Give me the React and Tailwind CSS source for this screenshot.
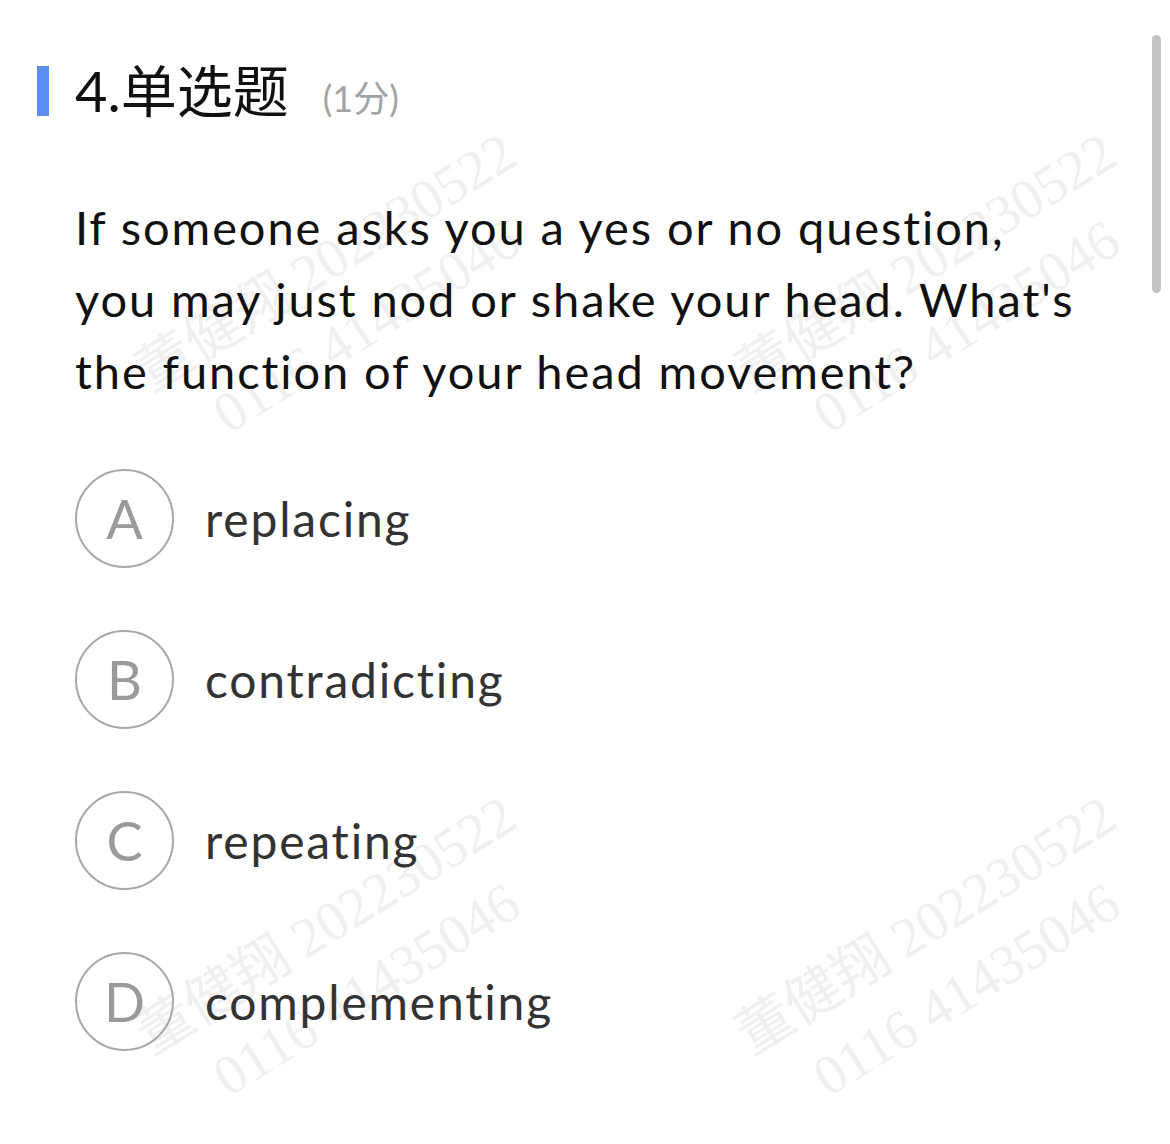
import React from "react";

const options = [
    { key: "A", text: "replacing" },
    { key: "B", text: "contradicting" },
    { key: "C", text: "repeating" },
    { key: "D", text: "complementing" },
];

const marks = [
    "left-[346px] top-[294px]",
    "left-[946px] top-[294px]",
    "left-[346px] top-[957px]",
    "left-[946px] top-[957px]",
];

function Watermark({ pos }) {
    return (
        <div
            className={`absolute ${pos} -translate-x-1/2 -translate-y-1/2 -rotate-[32deg] text-center whitespace-nowrap text-[56px] leading-[76px] text-[#f0f0f0] font-['Liberation_Serif','Noto_Sans_CJK_SC',serif] select-none`}
        >
            <div>董健翔 202230522</div>
            <div>0116 41435046</div>
        </div>
    );
}

function Option({ opt }) {
    return (
        <div className="flex items-center">
            <div className="w-[99px] h-[99px] rounded-full border-2 border-[#a8a8a8] flex items-center justify-center flex-none">
                <span className="text-[54px] leading-none text-[#9a9a9a]">{opt.key}</span>
            </div>
            <span className="ml-[31px] text-[48px] leading-none tracking-[1.8px] text-[#333333]">{opt.text}</span>
        </div>
    );
}

export default function App() {
    return (
        <div className="relative w-[1170px] h-[1144px] bg-white overflow-hidden font-['Lato','Noto_Sans_CJK_SC',sans-serif]">
            {/* watermark layer, behind content */}
            <div className="absolute inset-0 pointer-events-none">
                {marks.map((p) => (
                    <Watermark key={p} pos={p} />
                ))}
            </div>

            <div className="relative">
                {/* header */}
                <div className="flex items-center mt-[66px] h-[50px]">
                    <div className="ml-[37px] w-[12px] h-[50px] bg-[#5b8ef0]" />
                    <div className="ml-[26px] flex items-baseline">
                        <span className="text-[56px] leading-none text-[#111111]">4.单选题</span>
                        <span className="ml-[34px] text-[36px] leading-none text-[#a3a3a3]">(1分)</span>
                    </div>
                </div>

                {/* question */}
                <p className="mt-[75px] pl-[75px] text-[47px] leading-[72px] tracking-[1.9px] text-[#111111]">
                    If someone asks you a yes or no question,
                    <br />
                    you may just nod or shake your head. What's
                    <br />
                    the function of your head movement?
                </p>

                {/* options */}
                <div className="mt-[62px] pl-[75px] flex flex-col gap-[62px]">
                    {options.map((o) => (
                        <Option key={o.key} opt={o} />
                    ))}
                </div>
            </div>

            {/* scrollbar */}
            <div className="absolute left-[1152px] top-[35px] w-[9px] h-[258px] rounded-full bg-[#c4c4c4]" />
        </div>
    );
}
